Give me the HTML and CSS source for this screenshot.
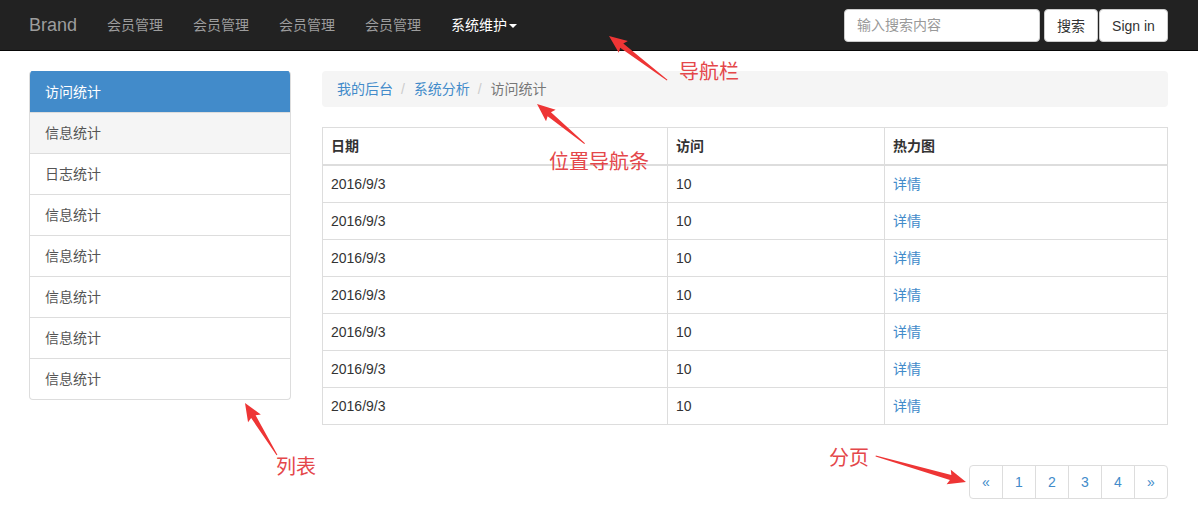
FILE: index.html
```html
<!DOCTYPE html>
<html lang="zh-CN">
<head>
  <meta charset="UTF-8" />
  <title>后台管理</title>
  <link rel="stylesheet" href="styles.css">
</head>
<body>
  <div class="navbar">
    <a class="brand" href="#">Brand</a>
    <ul class="nav">
      <li><a href="#">会员管理</a></li>
      <li><a href="#">会员管理</a></li>
      <li><a href="#">会员管理</a></li>
      <li><a href="#">会员管理</a></li>
      <li class="open"><a href="#">系统维护<span class="caret"></span></a></li>
    </ul>
    <form class="search">
      <input type="text" placeholder="输入搜索内容" />
      <button type="button" class="btn btn-search">搜索</button>
      <button type="button" class="btn btn-sign">Sign in</button>
    </form>
  </div>

  <div class="page">
    <div class="list-group">
      <a class="item active" href="#">访问统计</a>
      <a class="item hover" href="#">信息统计</a>
      <a class="item" href="#">日志统计</a>
      <a class="item" href="#">信息统计</a>
      <a class="item" href="#">信息统计</a>
      <a class="item" href="#">信息统计</a>
      <a class="item" href="#">信息统计</a>
      <a class="item" href="#">信息统计</a>
    </div>

    <div class="main">
      <ol class="breadcrumb">
        <li><a href="#">我的后台</a></li>
        <li><a href="#">系统分析</a></li>
        <li class="current">访问统计</li>
      </ol>

      <table class="table">
        <colgroup>
          <col style="width: 345px">
          <col style="width: 217px">
          <col>
        </colgroup>
        <thead>
          <tr><th>日期</th><th>访问</th><th>热力图</th></tr>
        </thead>
        <tbody>
          <tr><td>2016/9/3</td><td>10</td><td><a href="#">详情</a></td></tr>
          <tr><td>2016/9/3</td><td>10</td><td><a href="#">详情</a></td></tr>
          <tr><td>2016/9/3</td><td>10</td><td><a href="#">详情</a></td></tr>
          <tr><td>2016/9/3</td><td>10</td><td><a href="#">详情</a></td></tr>
          <tr><td>2016/9/3</td><td>10</td><td><a href="#">详情</a></td></tr>
          <tr><td>2016/9/3</td><td>10</td><td><a href="#">详情</a></td></tr>
          <tr><td>2016/9/3</td><td>10</td><td><a href="#">详情</a></td></tr>
        </tbody>
      </table>

      <ul class="pagination">
        <li><a href="#">&laquo;</a></li>
        <li><a href="#">1</a></li>
        <li><a href="#">2</a></li>
        <li><a href="#">3</a></li>
        <li><a href="#">4</a></li>
        <li><a href="#">&raquo;</a></li>
      </ul>
    </div>
  </div>

  <!-- red annotation marks drawn over the screenshot -->
  <div class="notes">
    <svg width="1198" height="518" viewBox="0 0 1198 518">
      <g fill="#ee3535">
        <polygon transform="translate(609,36) rotate(37.2)" points="0,0 18,-7.5 16,-2.6 73,-0.5 73,0.5 16,2.6 18,7.5" />
        <polygon transform="translate(537,104) rotate(39.8)" points="0,0 18,-7.5 16,-2.6 62,-0.5 62,0.5 16,2.6 18,7.5" />
        <polygon transform="translate(245,403) rotate(58.4)" points="0,0 18,-7.5 16,-2.6 61,-0.5 61,0.5 16,2.6 18,7.5" />
        <polygon transform="translate(966,482) rotate(196.1)" points="0,0 18,-7.5 16,-2.6 94,-0.5 94,0.5 16,2.6 18,7.5" />
      </g>
    </svg>
    <span class="label nav-label">导航栏</span>
    <span class="label crumb-label">位置导航条</span>
    <span class="label list-label">列表</span>
    <span class="label page-label">分页</span>
  </div>
</body>
</html>
```

FILE: styles.css
```css
* {
  box-sizing: border-box;
}

body {
  margin: 0;
  font-family: "Liberation Sans", "Noto Sans CJK SC", sans-serif;
  font-size: 14px;
  line-height: 20px;
  color: #333;
  background: #fff;
  position: relative;
  width: 1198px;
  height: 518px;
  overflow: hidden;
}

a {
  color: #428bca;
  text-decoration: none;
}

ul, ol {
  list-style: none;
  margin: 0;
  padding: 0;
}

/* navbar */
.navbar {
  display: flex;
  align-items: center;
  height: 51px;
  padding: 0 30px 0 14px;
  background: #222;
  border-bottom: 1px solid #080808;
}

.brand {
  padding: 15px;
  font-size: 18px;
  line-height: 20px;
  color: #9d9d9d;
}

.nav {
  display: flex;
}

.nav a {
  display: block;
  padding: 15px;
  color: #9d9d9d;
}

.nav .open a {
  color: #fff;
}

.caret {
  display: inline-block;
  width: 0;
  height: 0;
  margin-left: 2px;
  vertical-align: middle;
  border-top: 4px solid;
  border-left: 4px solid transparent;
  border-right: 4px solid transparent;
}

.search {
  display: flex;
  margin-left: auto;
  gap: 4px;
}

.search input {
  width: 196px;
  height: 33px;
  padding: 6px 12px;
  font: inherit;
  color: #555;
  border: 1px solid #ccc;
  border-radius: 4px;
  background: #fff;
}

.search input::placeholder {
  color: #999;
}

.btn {
  height: 33px;
  padding: 6px 0;
  font: inherit;
  color: #333;
  text-align: center;
  white-space: nowrap;
  background: #fff;
  border: 1px solid #ccc;
  border-radius: 4px;
}

.btn-search {
  width: 54px;
}

.btn-sign {
  width: 69px;
  margin-left: -3px;
}

/* layout */
.page {
  display: grid;
  grid-template-columns: 262px 846px;
  gap: 31px;
  padding: 20px 0 0 29px;
}

/* side list */
.list-group {
  display: flex;
  flex-direction: column;
  border: 1px solid #ddd;
  border-top: none;
  border-radius: 4px;
  overflow: hidden;
  align-self: start;
}

.item {
  display: block;
  padding: 10px 15px;
  color: #555;
  border-top: 1px solid #ddd;
}

.item.active {
  color: #fff;
  background: #428bca;
  border-top-color: #428bca;
}

.item.hover {
  background: #f5f5f5;
}

/* breadcrumb */
.breadcrumb {
  display: flex;
  margin: 0 0 20px;
  padding: 8px 15px;
  background: #f5f5f5;
  border-radius: 4px;
}

.breadcrumb li + li::before {
  content: "/\00a0";
  padding: 0 5px 0 8px;
  color: #ccc;
}

.breadcrumb .current {
  color: #777;
}

/* table */
.table {
  width: 100%;
  table-layout: fixed;
  border-collapse: collapse;
  border: 1px solid #ddd;
}

.table th,
.table td {
  padding: 8px;
  text-align: left;
  border: 1px solid #ddd;
}

.table th {
  border-bottom-width: 2px;
}

/* pagination */
.pagination {
  display: flex;
  justify-content: flex-end;
  margin-top: 40px;
}

.pagination a {
  display: block;
  width: 34px;
  height: 34px;
  line-height: 32px;
  text-align: center;
  border: 1px solid #ddd;
  margin-left: -1px;
}

.pagination li:first-child a {
  border-radius: 4px 0 0 4px;
}

.pagination li:last-child a {
  border-radius: 0 4px 4px 0;
}

/* annotations */
.notes {
  position: absolute;
  left: 0;
  top: 0;
  width: 1198px;
  height: 518px;
  pointer-events: none;
}

.notes svg {
  position: absolute;
  left: 0;
  top: 0;
}

.label {
  position: absolute;
  font-size: 20px;
  line-height: 22px;
  color: #e4474a;
}

.nav-label {
  left: 679px;
  top: 61px;
}

.crumb-label {
  left: 549px;
  top: 151px;
}

.list-label {
  left: 276px;
  top: 456px;
}

.page-label {
  left: 829px;
  top: 447px;
}
```
